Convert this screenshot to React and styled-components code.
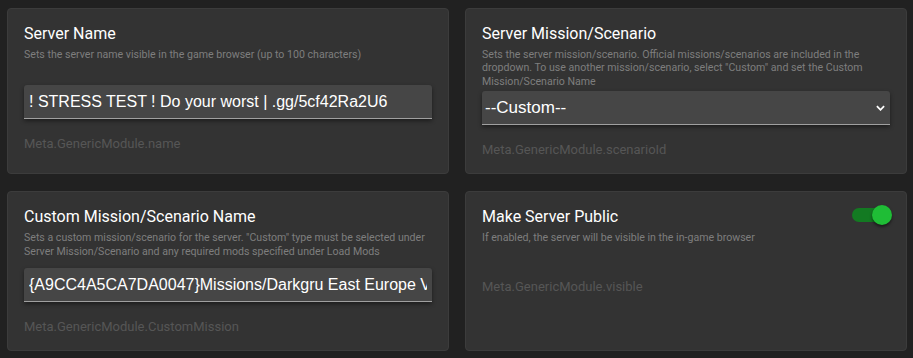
import React from "react";
import styled, { createGlobalStyle } from "styled-components";

const GlobalStyle = createGlobalStyle`
  body {
    margin: 0;
    background: #212121;
    font-family: Roboto, "Noto Sans", sans-serif;
  }
`;

const SETTINGS = [
  {
    key: "name",
    title: "Server Name",
    description: "Sets the server name visible in the game browser (up to 100 characters)",
    kind: "text",
    value: "! STRESS TEST ! Do your worst | .gg/5cf42Ra2U6",
    meta: "Meta.GenericModule.name",
  },
  {
    key: "scenario",
    title: "Server Mission/Scenario",
    description:
      'Sets the server mission/scenario. Official missions/scenarios are included in the dropdown. To use another mission/scenario, select "Custom" and set the Custom Mission/Scenario Name',
    kind: "select",
    value: "--Custom--",
    meta: "Meta.GenericModule.scenarioId",
  },
  {
    key: "custom",
    title: "Custom Mission/Scenario Name",
    description:
      'Sets a custom mission/scenario for the server. "Custom" type must be selected under Server Mission/Scenario and any required mods specified under Load Mods',
    kind: "text",
    value: "{A9CC4A5CA7DA0047}Missions/Darkgru East Europe V2.conf",
    meta: "Meta.GenericModule.CustomMission",
  },
  {
    key: "visible",
    title: "Make Server Public",
    description: "If enabled, the server will be visible in the in-game browser",
    kind: "switch",
    value: true,
    meta: "Meta.GenericModule.visible",
  },
];

export default function App() {
  return (
    <>
      <GlobalStyle />
      <Grid>
        {SETTINGS.map((s) => (
          <Card key={s.key}>
            <Header>
              <Title>{s.title}</Title>
              {s.kind === "switch" && (
                <Toggle>
                  <Track on={s.value} />
                  <Thumb on={s.value} />
                </Toggle>
              )}
            </Header>
            <Description>{s.description}</Description>
            {s.kind === "text" && <TextInput readOnly value={s.value} />}
            {s.kind === "select" && (
              <SelectWrap>
                <Select value={s.value} onChange={() => {}}>
                  <option>{s.value}</option>
                </Select>
                <Chevron viewBox="0 0 10 6">
                  <path d="M1 1l4 4 4-4" fill="none" stroke="#fff" strokeWidth="2" />
                </Chevron>
              </SelectWrap>
            )}
            <Meta compact={s.kind === "switch"}>{s.meta}</Meta>
          </Card>
        ))}
      </Grid>
    </>
  );
}

const Grid = styled.div`
  display: grid;
  grid-template-columns: 1fr 1fr;
  gap: 17px 16px;
  padding: 8px 6px 8px 7px;
`;

const Card = styled.div`
  background: #333333;
  border: 1px solid #3c3c3c;
  border-radius: 4px;
  padding: 15px 16px 15px;
  display: flex;
  flex-direction: column;
`;

const Header = styled.div`
  display: flex;
  justify-content: space-between;
  align-items: flex-start;
`;

const Title = styled.div`
  color: #ffffff;
  font-size: 16px;
  line-height: 20px;
`;

const Description = styled.div`
  margin-top: 4px;
  margin-bottom: 3px;
  min-height: 34px;
  color: #7e7e7e;
  font-size: 10.6px;
  line-height: 13.4px;
`;

const fieldBase = `
  box-sizing: border-box;
  width: 100%;
  background: #464646;
  border: none;
  border-bottom: 1px solid #a0a0a0;
  border-radius: 3px 3px 0 0;
  box-shadow: 0 2px 4px rgba(0, 0, 0, 0.45);
  color: #ffffff;
  font-family: "Liberation Sans", Arial, sans-serif;
  font-size: 16px;
  outline: none;
`;

const TextInput = styled.input`
  ${fieldBase}
  height: 34px;
  padding: 0 5px;
`;

const SelectWrap = styled.div`
  position: relative;
`;

const Select = styled.select`
  ${fieldBase}
  appearance: none;
  height: 34px;
  padding: 0 3px;
  font-size: 17px;
`;

const Chevron = styled.svg`
  position: absolute;
  right: 5px;
  top: 14px;
  width: 9px;
  height: 6px;
`;

const Meta = styled.div`
  margin-top: ${(p) => (p.compact ? "11px" : "17px")};
  color: #565656;
  font-size: 13px;
  line-height: 16px;
`;

const Toggle = styled.div`
  position: relative;
  width: 40px;
  height: 20px;
  margin-top: -2px;
  margin-right: -2px;
`;

const Track = styled.div`
  position: absolute;
  left: 0;
  top: 3px;
  width: 34px;
  height: 14px;
  border-radius: 7px;
  background: ${(p) => (p.on ? "#137a22" : "#666")};
`;

const Thumb = styled.div`
  position: absolute;
  top: 0;
  ${(p) => (p.on ? "right: 0;" : "left: 0;")}
  width: 20px;
  height: 20px;
  border-radius: 50%;
  background: ${(p) => (p.on ? "#1fbd36" : "#ccc")};
  box-shadow: 0 2px 3px rgba(0, 0, 0, 0.5);
`;
